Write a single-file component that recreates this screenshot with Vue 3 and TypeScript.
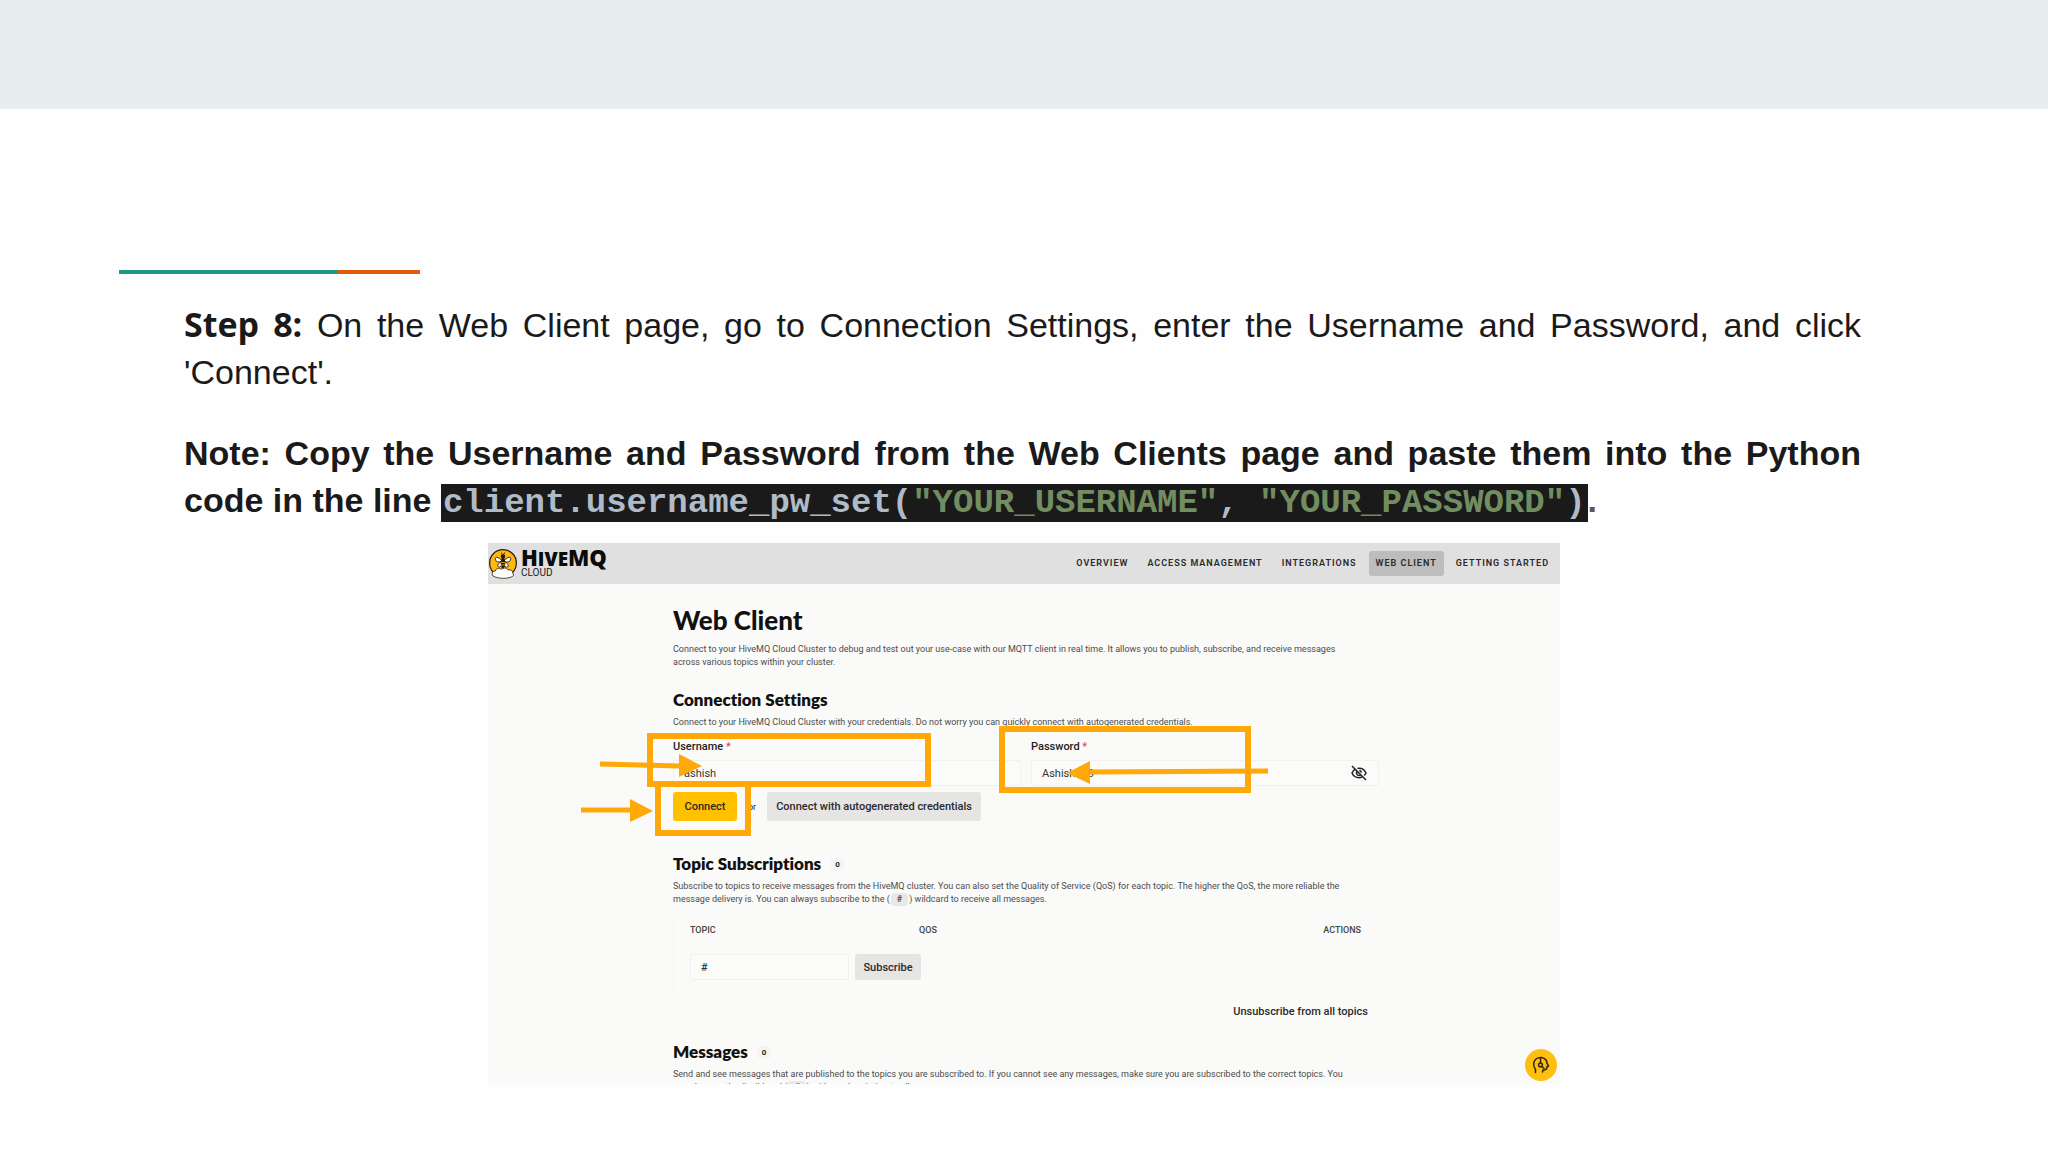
<script setup lang="ts">
interface NavItem {
  label: string
  active: boolean
}

const nav: NavItem[] = [
  { label: 'OVERVIEW', active: false },
  { label: 'ACCESS MANAGEMENT', active: false },
  { label: 'INTEGRATIONS', active: false },
  { label: 'WEB CLIENT', active: true },
  { label: 'GETTING STARTED', active: false },
]
</script>

<template>
  <main class="slide">
    <div class="band"></div>
    <div class="rule"><span class="rule-teal"></span><span class="rule-orange"></span></div>

    <section class="copy">
      <p><strong class="step">Step 8:</strong> On the Web Client page, go to Connection Settings, enter the Username and Password, and click 'Connect'.</p>
      <p class="note">Note: Copy the Username and Password from the Web Clients page and paste them into the Python code in the line <code>client.username_pw_set(<span class="str">"YOUR_USERNAME"</span>, <span class="str">"YOUR_PASSWORD"</span>)</code><span class="stop">.</span></p>
    </section>

    <section class="shot">
      <header class="top">
        <div class="brand">
          <svg class="bee" viewBox="0 0 30 32" aria-hidden="true">
            <circle cx="15" cy="15" r="13.4" fill="#fcb813" stroke="#2b1b0c" stroke-width="1.2" />
            <path d="M5 28c-2-3 0-5 2.500-5 .5-3 4-3.500 5.500-1.500 2-2 6-2 7 .5 3-.5 5 1 4.500 3 1.500 1 1 3 0 3.500-5 2.500-14 2.500-19.500-.5z" fill="#fff" stroke="#2b1b0c" stroke-width=".8" />
            <path d="M14 12.500C9 8 6.500 8.500 7.500 12c.5 2 3.500 2.500 6.500 1.500-4 1.500-5 4-3.500 5.500 1.500 1 3.500-2 4.500-4.500 1 2.500 3 5.500 4.500 4.500 1.500-1.500.5-4-3.500-5.500 3 1 6 .5 6.500-1.500 1-3.500-1.500-4-6.500.5z" fill="#fff" stroke="#2b1b0c" stroke-width=".9" />
            <circle cx="15" cy="8.500" r="2.200" fill="#2b1b0c" />
            <path d="M13.500 4.500l1 3M16.500 4.500l-1 3" stroke="#2b1b0c" stroke-width=".8" />
            <ellipse cx="15" cy="15" rx="2.300" ry="5.500" fill="#2b1b0c" />
            <path d="M13 14.500h4M13 17h4" stroke="#fcb813" stroke-width=".8" />
          </svg>
          <div class="brand-text">
            <span class="brand-name">H<small>IVE</small>MQ</span>
            <span class="brand-sub">CLOUD</span>
          </div>
        </div>
        <nav class="nav">
          <a v-for="n in nav" :key="n.label" href="#" :class="{ active: n.active }">{{ n.label }}</a>
        </nav>
      </header>

      <div class="body">
        <h1>Web Client</h1>
        <p class="text">Connect to your HiveMQ Cloud Cluster to debug and test out your use-case with our MQTT client in real time. It allows you to publish, subscribe, and receive messages<br>across various topics within your cluster.</p>

        <h2 class="conn-title">Connection Settings</h2>
        <p class="text">Connect to your HiveMQ Cloud Cluster with your credentials. Do not worry you can quickly connect with autogenerated credentials.</p>

        <form class="form" @submit.prevent>
          <div class="fields">
            <div class="field">
              <label for="user">Username <i>*</i></label>
              <input id="user" type="text" value="ashish">
            </div>
            <div class="field">
              <label for="pass">Password <i>*</i></label>
              <div class="pass">
                <input id="pass" type="text" value="Ashish123">
                <button type="button" class="eye" aria-label="Hide password">
                  <svg viewBox="0 0 16 16" fill="none" stroke="#222" stroke-width="1.500">
                    <path d="M4.500 4.200C2.800 5.200 1.600 6.700 1 8c1.200 2.700 4 4.700 7 4.700 1.200 0 2.300-.3 3.300-.8M6.500 3.500c.5-.1 1-.2 1.500-.2 3 0 5.800 2 7 4.700-.4.900-1 1.800-1.800 2.500" />
                    <path d="M6.300 6.300a2.400 2.400 0 0 0 3.400 3.400M8.300 5.600a2.400 2.400 0 0 1 2.100 2.100" />
                    <path d="M1 1l14 14" />
                  </svg>
                </button>
              </div>
            </div>
          </div>
          <div class="actions">
            <button type="submit" class="btn primary">Connect</button>
            <span class="or">or</span>
            <button type="button" class="btn wide">Connect with autogenerated credentials</button>
          </div>
        </form>

        <h2 class="topic-title">Topic Subscriptions <span class="count">0</span></h2>
        <p class="text">Subscribe to topics to receive messages from the HiveMQ cluster. You can also set the Quality of Service (QoS) for each topic. The higher the QoS, the more reliable the<br>message delivery is. You can always subscribe to the (<span class="key">#</span>) wildcard to receive all messages.</p>

        <table class="topics">
          <thead>
            <tr><th class="c1">TOPIC</th><th>QOS</th><th class="c3">ACTIONS</th></tr>
          </thead>
          <tbody>
            <tr>
              <td colspan="3">
                <div class="sub">
                  <input type="text" value="#" aria-label="Topic">
                  <button type="button" class="btn small">Subscribe</button>
                </div>
              </td>
            </tr>
          </tbody>
        </table>
        <button type="button" class="unsub">Unsubscribe from all topics</button>

        <h2 class="msg-title">Messages <span class="count">0</span></h2>
        <p class="text">Send and see messages that are published to the topics you are subscribed to. If you cannot see any messages, make sure you are subscribed to the correct topics. You<br>can also use the # wildcard (<span class="key">#</span>) with a subscription to all.</p>
      </div>

      <button type="button" class="help" aria-label="Help">
        <svg viewBox="0 0 18 18" fill="none" stroke="#33240a" stroke-width="1.500" stroke-linecap="round">
          <path d="M3.500 16.500v-3C1 10 1 5.500 4 3c3-2.400 8-2 10 1 .8 1.200 1 2.500 1 3.500l1.500 2.500-1.500.8c0 2-.5 3-2.500 3.200h-1.500l-.5 2" />
          <path d="M8.500 2v5" /><circle cx="8.500" cy="9" r="1.900" /><path d="M10 10.500l2 2" />
        </svg>
      </button>

      <svg class="marks" viewBox="0 0 1072 541" fill="none" stroke="#ffa808" stroke-width="6" aria-hidden="true">
        <rect x="162" y="193" width="278" height="48" />
        <rect x="170" y="241" width="90" height="49" />
        <rect x="514" y="186" width="246" height="61" />
        <path d="M112 221l80 2M93 267h50M780 228l-179 1" stroke-width="5" />
        <path d="M191 211v23l23-11zM142 256v23l23-11zM602 218v23l-23-11z" fill="#ffa808" stroke="none" />
      </svg>
    </section>
  </main>
</template>

<style>
body {
  margin: 0;
  background: #fefefe;
}
</style>

<style scoped>
* {
  box-sizing: border-box;
}
.slide {
  min-height: 100vh;
  background: #fefefe;
  overflow: hidden;
}
.band {
  height: 109px;
  background: #e8eeed;
}
.rule {
  display: flex;
  margin: 161px 0 0 119px;
}
.rule span {
  height: 4px;
}
.rule-teal {
  width: 219px;
  background: #1e9688;
}
.rule-orange {
  width: 82px;
  background: #e25b0c;
}
.copy {
  margin: 28px 187px 0 184px;
  font: 34px/47px "Liberation Sans", Arial, sans-serif;
  color: #1a1a1a;
  text-align: justify;
}
.copy p {
  margin: 0 0 34px;
}
.copy .note {
  margin: 0;
  font-weight: 700;
}
.step {
  font-family: "Open Sans", sans-serif;
  line-height: 1;
}
code {
  padding: 0 2px;
  font: 700 34px/38px "Liberation Mono", "Courier New", monospace;
  background: #1a1a1a;
  color: #b0bac8;
}
.str {
  color: #728d60;
}
.stop {
  color: #595959;
}
.shot {
  position: relative;
  max-width: 1072px;
  height: 541px;
  margin: 19px auto 0;
  overflow: hidden;
  background: #fafaf8;
  font-family: Roboto, sans-serif;
  color: #222;
}
.top {
  display: flex;
  justify-content: space-between;
  align-items: center;
  height: 41px;
  padding-right: 4px;
  background: #e0e0e0;
}
.brand {
  display: flex;
  align-items: center;
}
.bee {
  width: 30px;
  height: 32px;
}
.brand-text {
  display: flex;
  flex-direction: column;
  margin: 0 0 2px 3px;
}
.brand-name {
  font: 800 22px/18px "Open Sans", sans-serif;
  color: #0b0b0b;
}
.brand-name small {
  font-size: 19px;
}
.brand-sub {
  font-size: 10px;
  line-height: 10px;
}
.nav {
  display: flex;
  gap: 5px;
}
.nav a {
  padding: 0 7px;
  border-radius: 3px;
  font-size: 9px;
  line-height: 25px;
  font-weight: 600;
  letter-spacing: 1px;
  color: #2a2a2a;
  text-decoration: none;
  white-space: nowrap;
}
.nav .active {
  background: #bdbdbd;
}
.body {
  margin: 21px 183px 0 185px;
}
h1,
h2 {
  margin: 0;
  font-family: Lato, sans-serif;
  font-variant-ligatures: none;
  color: #111;
  white-space: nowrap;
}
h1 {
  font-size: 26px;
  line-height: 30px;
  font-weight: 900;
}
h2 {
  display: flex;
  align-items: center;
  font-size: 17px;
  line-height: 20px;
  font-weight: 800;
}
.text {
  margin: 0;
  font-size: 9px;
  line-height: 13px;
  color: #4c4c4c;
  white-space: nowrap;
}
h1 + .text {
  margin-top: 8px;
}
.conn-title {
  margin-top: 21px;
}
h2 + .text {
  margin-top: 6px;
}
.form {
  margin-top: 11px;
}
.fields {
  display: grid;
  grid-template-columns: 348px 348px;
  gap: 10px;
}
.field label {
  display: block;
  font-size: 11px;
  line-height: 14px;
  font-weight: 500;
}
.field i {
  font-style: normal;
  color: #e04a5a;
}
input {
  width: 100%;
  height: 26px;
  padding: 0 10px;
  border: 1px solid #f1f1ef;
  border-radius: 2px;
  background: #fbfbfa;
  font: 11px Roboto, sans-serif;
  color: #333;
}
.field input {
  display: block;
  margin-top: 6px;
}
.pass {
  position: relative;
}
button {
  border: 0;
  padding: 0;
  font-family: Roboto, sans-serif;
  color: #2a2a2a;
}
.eye {
  position: absolute;
  right: 12px;
  top: 5px;
  width: 16px;
  height: 16px;
  background: none;
}
.eye svg,
.help svg {
  display: block;
}
.actions {
  display: flex;
  align-items: center;
  margin-top: 6px;
}
.btn {
  height: 29px;
  border-radius: 3px;
  background: #e6e5e4;
  font-size: 11px;
  font-weight: 500;
}
.primary {
  width: 64px;
  background: #ffc000;
}
.wide {
  width: 214px;
}
.or {
  width: 30px;
  text-align: center;
  font-size: 9px;
}
.topic-title {
  margin-top: 33px;
}
.count {
  margin-left: 10px;
  padding: 0 4px;
  border-radius: 3px;
  background: #f4f4f2;
  font: 600 8px/13px Roboto, sans-serif;
}
.key {
  display: inline-block;
  margin: 0 1px;
  padding: 0 6px;
  border-radius: 4px;
  background: #e8e8e6;
  font-weight: 600;
}
.topics {
  width: 706px;
  margin-top: 10px;
  border: 1px solid #f6f6f4;
  border-collapse: separate;
  border-spacing: 0;
}
.topics th {
  height: 26px;
  padding: 0;
  text-align: left;
  font-size: 9px;
  font-weight: 500;
  color: #444;
}
.topics .c1 {
  width: 245px;
  padding-left: 16px;
}
.topics .c3 {
  padding-right: 17px;
  text-align: right;
}
.topics td {
  padding: 11px 16px 13px;
}
.sub {
  display: flex;
  gap: 6px;
}
.sub input {
  width: 159px;
  font-weight: 500;
}
.small {
  width: 66px;
  height: 26px;
}
.unsub {
  display: block;
  margin: 10px 9px 0 auto;
  background: none;
  font-size: 11px;
  line-height: 16px;
  font-weight: 500;
}
.msg-title {
  margin-top: 22px;
}
.help {
  position: absolute;
  right: 3px;
  bottom: 3px;
  width: 32px;
  height: 32px;
  padding: 7px;
  border-radius: 50%;
  background: #fdc010;
}
.marks {
  position: absolute;
  left: 0;
  top: 0;
  width: 1072px;
  height: 541px;
  pointer-events: none;
}
</style>
